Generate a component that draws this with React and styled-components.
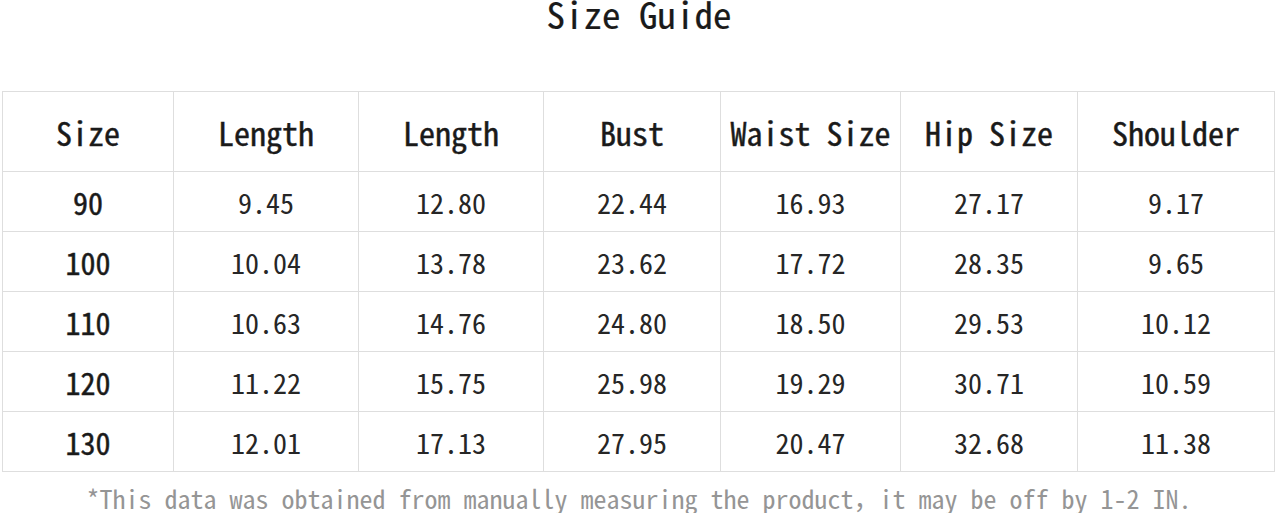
import React from 'react';
import styled, { createGlobalStyle } from 'styled-components';

const GlobalStyle = createGlobalStyle`
  html, body {
    margin: 0;
    padding: 0;
    background: #fff;
  }
  body {
    font-family: "Noto Sans Mono CJK SC", "Liberation Mono", monospace;
    color: #1a1a1a;
  }
`;

const headers = ['Size', 'Length', 'Length', 'Bust', 'Waist Size', 'Hip Size', 'Shoulder'];
const widths = [171, 185, 185, 177, 180, 177, 197];

const rows = [
  ['90', '9.45', '12.80', '22.44', '16.93', '27.17', '9.17'],
  ['100', '10.04', '13.78', '23.62', '17.72', '28.35', '9.65'],
  ['110', '10.63', '14.76', '24.80', '18.50', '29.53', '10.12'],
  ['120', '11.22', '15.75', '25.98', '19.29', '30.71', '10.59'],
  ['130', '12.01', '17.13', '27.95', '20.47', '32.68', '11.38'],
];

const App = () => (
  <Page>
    <GlobalStyle />
    <Title>Size Guide</Title>
    <Table>
      <colgroup>
        {widths.map((w, i) => (
          <col key={i} style={{ width: w }} />
        ))}
      </colgroup>
      <thead>
        <tr>
          {headers.map((h, i) => (
            <HeadCell key={i}>{h}</HeadCell>
          ))}
        </tr>
      </thead>
      <tbody>
        {rows.map((r) => (
          <tr key={r[0]}>
            {r.map((v, i) => (
              <Cell key={i} $strong={i === 0}>{v}</Cell>
            ))}
          </tr>
        ))}
      </tbody>
    </Table>
    <Note>*This data was obtained from manually measuring the product，it may be off by 1-2 IN.</Note>
  </Page>
);

export default App;

const Page = styled.div`
  width: 1278px;
  display: flex;
  flex-direction: column;
`;

// the CJK mono face has a tall ascent, so the line box is kept tight
const Title = styled.h1`
  margin: 0 0 65px;
  height: 26px;
  font-size: 37px;
  line-height: 26px;
  font-weight: 400;
  -webkit-text-stroke: 0.2px currentColor;
  color: #1a1a1a;
  text-align: center;
`;

const Table = styled.table`
  width: 1272px;
  margin-left: 2px;
  table-layout: fixed;
  border-collapse: collapse;
`;

const HeadCell = styled.th`
  height: 79px;
  padding: 0;
  border: 1px solid #dedede;
  font-size: 32px;
  font-weight: 400;
  -webkit-text-stroke: 0.45px currentColor;
  text-align: center;
  vertical-align: middle;
  color: #1a1a1a;
  white-space: nowrap;
`;

const Cell = styled.td`
  height: 59px;
  padding: 0;
  border: 1px solid #dedede;
  font-size: ${(p) => (p.$strong ? '30px' : '28px')};
  font-weight: 400;
  -webkit-text-stroke: ${(p) => (p.$strong ? '0.45px currentColor' : '0')};
  text-align: center;
  vertical-align: middle;
  color: ${(p) => (p.$strong ? '#1a1a1a' : '#262626')};
`;

const Note = styled.p`
  margin: 11px 0 0;
  font-size: 26px;
  line-height: 30px;
  color: #959595;
  text-align: center;
  white-space: nowrap;
`;
